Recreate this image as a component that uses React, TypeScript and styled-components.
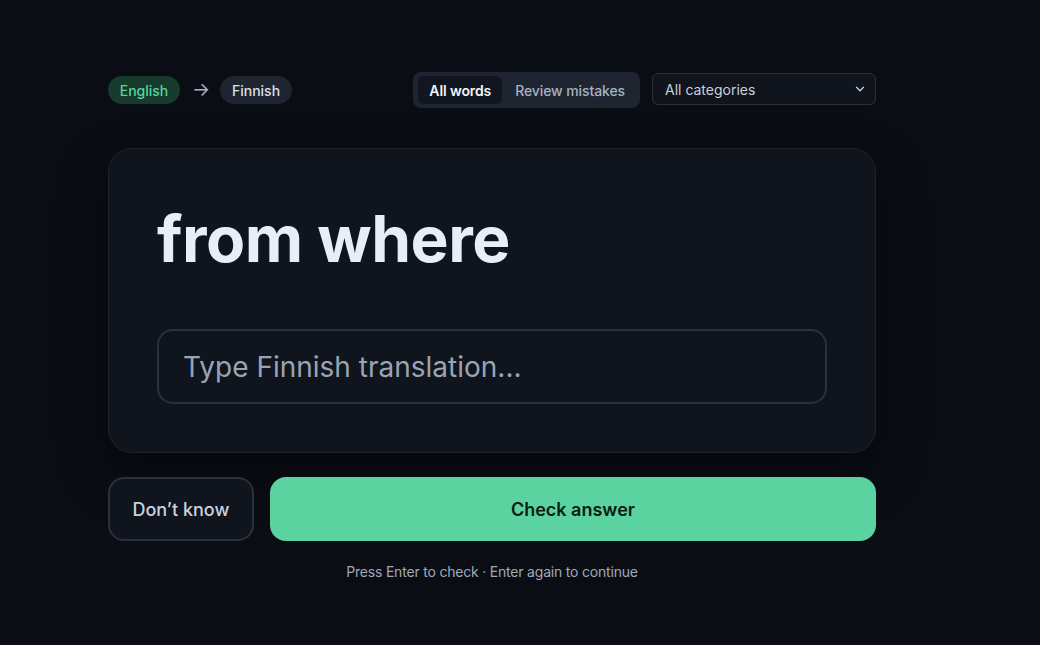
import styled, { createGlobalStyle } from "styled-components";
import { ChevronDown } from "lucide-react";

const GlobalStyle = createGlobalStyle`
  html, body {
    margin: 0;
    padding: 0;
    background: #0a0d14;
    font-family: Inter, "Noto Sans", sans-serif;
    color: #e8edf5;
  }
  * { box-sizing: border-box; }
`;

const Page = styled.div`
  min-height: 645px;
  padding: 72px 0 0 108px;
`;

const Column = styled.div`
  width: 768px;
  display: flex;
  flex-direction: column;
`;

const TopBar = styled.div`
  display: flex;
  align-items: center;
  justify-content: space-between;
  height: 36px;
`;

const LangRow = styled.div`
  display: flex;
  align-items: center;
  gap: 12px;
`;

const LangPill = styled.span<{ $source?: boolean }>`
  display: inline-flex;
  align-items: center;
  justify-content: center;
  width: 72px;
  height: 28px;
  border-radius: 999px;
  font-size: 14px;
  font-weight: 500;
  background: ${(p) => (p.$source ? "#163a2c" : "#1e2430")};
  color: ${(p) => (p.$source ? "#5ad3a0" : "#d9e0ea")};
`;

const Arrow = styled.span`
  font-size: 19px;
  line-height: 1;
  margin-top: -2px;
  color: #a9b2c0;
  width: 16px;
  text-align: center;
`;

const Controls = styled.div`
  display: flex;
  align-items: center;
  gap: 12px;
`;

const Segmented = styled.div`
  display: flex;
  align-items: center;
  height: 36px;
  padding: 4px 4px 4px 5px;
  gap: 2px;
  border-radius: 8px;
  background: #1e2430;
`;

const Segment = styled.button<{ $active?: boolean }>`
  height: 28px;
  padding: 0 11px;
  border: 0;
  border-radius: 6px;
  font-family: inherit;
  font-size: 14px;
  letter-spacing: -0.1px;
  font-weight: ${(p) => (p.$active ? 600 : 500)};
  color: ${(p) => (p.$active ? "#f3f6fa" : "#a9b2c0")};
  background: ${(p) => (p.$active ? "#121620" : "transparent")};
`;

const SelectBox = styled.div`
  display: flex;
  align-items: center;
  justify-content: space-between;
  width: 224px;
  height: 32px;
  margin-bottom: 2px;
  padding: 0 8px 0 12px;
  border: 1px solid #2a303c;
  border-radius: 6px;
  background: #10141c;
  font-size: 14px;
  color: #c9d1dc;
`;

const Card = styled.div`
  margin-top: 40px;
  padding: 48px;
  border: 1px solid #1d222c;
  border-radius: 24px;
  background: #10141c;
  box-shadow: 0 20px 50px rgba(0, 0, 0, 0.45);
`;

const Word = styled.h1`
  margin: 0;
  font-size: 64px;
  font-weight: 700;
  line-height: 84px;
  letter-spacing: -0.5px;
  color: #e8eef7;
`;

const AnswerInput = styled.input`
  display: block;
  width: 100%;
  height: 75px;
  margin-top: 48px;
  padding: 0 24px;
  border: 2px solid #2a303c;
  border-radius: 16px;
  background: transparent;
  font-family: inherit;
  font-size: 28px;
  color: #e8eef7;
  outline: none;

  &::placeholder {
    color: #98a4b5;
  }
`;

const Actions = styled.div`
  display: flex;
  gap: 16px;
  margin-top: 24px;
`;

const Button = styled.button<{ $primary?: boolean }>`
  height: 64px;
  padding: 0 22.5px;
  border-radius: 16px;
  font-family: inherit;
  font-size: 18px;
  font-weight: ${(p) => (p.$primary ? 600 : 500)};
  flex: ${(p) => (p.$primary ? 1 : "none")};
  border: ${(p) => (p.$primary ? "0" : "2px solid #2a303c")};
  background: ${(p) => (p.$primary ? "#5ad3a0" : "#10141c")};
  color: ${(p) => (p.$primary ? "#0e1a15" : "#c9d3e0")};
`;

const Hint = styled.p`
  margin: 22px 0 0;
  text-align: center;
  font-size: 14px;
  letter-spacing: -0.2px;
  color: #a0a9b8;
`;

export default function App() {
  return (
    <>
      <GlobalStyle />
      <Page>
        <Column>
          <TopBar>
            <LangRow>
              <LangPill $source>English</LangPill>
              <Arrow>→</Arrow>
              <LangPill>Finnish</LangPill>
            </LangRow>
            <Controls>
              <Segmented>
                <Segment $active>All words</Segment>
                <Segment>Review mistakes</Segment>
              </Segmented>
              <SelectBox>
                <span>All categories</span>
                <ChevronDown size={14} strokeWidth={2.2} color="#c9d1dc" />
              </SelectBox>
            </Controls>
          </TopBar>
          <Card>
            <Word>from where</Word>
            <AnswerInput placeholder="Type Finnish translation..." />
          </Card>
          <Actions>
            <Button>Don’t know</Button>
            <Button $primary>Check answer</Button>
          </Actions>
          <Hint>Press Enter to check · Enter again to continue</Hint>
        </Column>
      </Page>
    </>
  );
}
